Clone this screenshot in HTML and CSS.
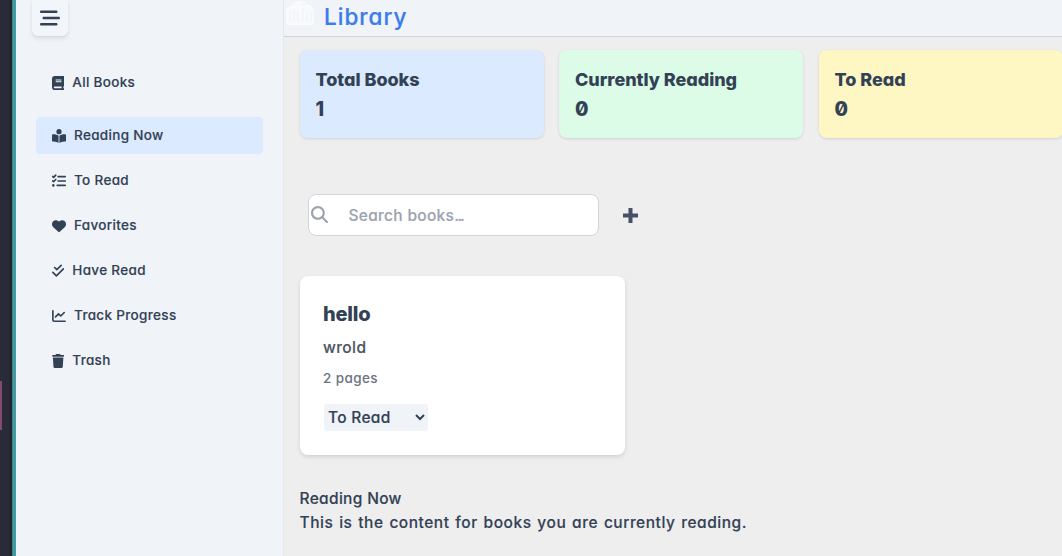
FILE: index.html
```html
<!DOCTYPE html>
<html lang="en">
<head>
<meta charset="utf-8">
<title>Library</title>
<link rel="stylesheet" href="styles.css">
</head>
<body>
<div class="desktop"><span class="desktop-mark"></span></div>
<div class="window-edge"></div>
<aside class="sidebar">
  <button class="menu-button" aria-label="Menu">
    <svg viewBox="0 0 512 512" width="20" height="20"><path d="M0 96C0 78.300 14.300 64 32 64H416c17.700 0 32 14.300 32 32s-14.300 32-32 32H32C14.300 128 0 113.700 0 96zM64 256c0-17.700 14.300-32 32-32H480c17.700 0 32 14.300 32 32s-14.300 32-32 32H96c-17.700 0-32-14.300-32-32zM448 416c0 17.700-14.300 32-32 32H32c-17.700 0-32-14.300-32-32s14.300-32 32-32H416c17.700 0 32 14.300 32 32z"/></svg>
  </button>
  <nav class="nav">
    <a class="nav-item nav-first"><svg viewBox="0 0 448 512" width="12.25" height="14"><path d="M96 0C43 0 0 43 0 96V416c0 53 43 96 96 96H384h32c17.700 0 32-14.300 32-32s-14.300-32-32-32V384c17.700 0 32-14.300 32-32V32c0-17.700-14.300-32-32-32H384 96zm0 384H352v64H96c-17.700 0-32-14.300-32-32s14.300-32 32-32zm32-240c0-8.800 7.200-16 16-16H336c8.800 0 16 7.200 16 16s-7.200 16-16 16H144c-8.800 0-16-7.200-16-16zm16 48H336c8.800 0 16 7.200 16 16s-7.200 16-16 16H144c-8.800 0-16-7.200-16-16s7.200-16 16-16z"/></svg><span>All Books</span></a>
    <a class="nav-item active"><svg viewBox="0 0 512 512" width="14" height="14"><path d="M160 96a96 96 0 1 1 192 0A96 96 0 1 1 160 96zm80 152V512l-48.400-24.200c-20.900-10.400-43.500-17-66.800-19.300l-96-9.600C12.500 457.200 0 443.500 0 427V224c0-17.700 14.300-32 32-32H62.300c63.600 0 125.600 19.600 177.700 56zm32 264V248c52.100-36.400 114.100-56 177.700-56H480c17.700 0 32 14.300 32 32V427c0 16.400-12.500 30.200-28.800 31.800l-96 9.600c-23.200 2.300-45.900 8.900-66.800 19.300L272 512z"/></svg><span>Reading Now</span></a>
    <a class="nav-item"><svg class="line" viewBox="0 0 512 512" width="14" height="14"><path d="M24 90l36 34 76-82M24 248l36 34 76-82M222 96H486M222 256H486M190 416H486"/><circle class="dot" cx="48" cy="416" r="46"/></svg><span>To Read</span></a>
    <a class="nav-item"><svg viewBox="0 0 512 512" width="14" height="14"><path d="M47.600 300.400L228.300 469.100c7.500 7 17.400 10.900 27.700 10.900s20.200-3.900 27.700-10.900L464.400 300.400c30.400-28.300 47.600-68 47.600-109.500v-5.800c0-69.900-50.500-129.500-119.400-141C347 36.500 300.600 51.400 268 84L256 96 244 84c-32.600-32.600-79-47.500-124.600-39.900C50.500 55.600 0 115.200 0 185.100v5.800c0 41.500 17.200 81.200 47.600 109.500z"/></svg><span>Favorites</span></a>
    <a class="nav-item"><svg class="line" viewBox="0 0 448 512" width="12.25" height="14"><path d="M96 128l80 80L336 48M32 304L160 432 416 176"/></svg><span>Have Read</span></a>
    <a class="nav-item"><svg class="line" viewBox="0 0 512 512" width="14" height="14"><path d="M32 64V400q0 48 48 48H480M128 288l112-112 80 80L448 128"/></svg><span>Track Progress</span></a>
    <a class="nav-item"><svg viewBox="0 0 448 512" width="12.25" height="14"><path d="M135.200 17.700L128 32H32C14.300 32 0 46.300 0 64S14.300 96 32 96H416c17.700 0 32-14.300 32-32s-14.300-32-32-32H320l-7.200-14.300C307.400 6.800 296.300 0 284.200 0H163.800c-12.100 0-23.200 6.800-28.600 17.700zM416 128H32L53.200 467c1.600 25.300 22.600 45 47.900 45H346.900c25.300 0 46.300-19.700 47.900-45L416 128z"/></svg><span>Trash</span></a>
  </nav>
</aside>
<main class="main">
  <header class="header">
    <svg class="logo" viewBox="0 0 30 27" width="30" height="27"><path d="M2 9L7 3l6-2 8 1 6 5 2 4V23q0 2-2 2H3q-2 0-2-2V9z"/><path class="logo-lines" d="M5 11V22M9 9V21M13 11V22M18 8V22M22 11V22M26 12V22M4 6l6-3M17 5l7-2"/></svg>
    <h1>Library</h1>
  </header>
  <section class="stats">
    <div class="stat blue"><h2>Total Books</h2><p>1</p></div>
    <div class="stat green"><h2>Currently Reading</h2><p>0</p></div>
    <div class="stat yellow"><h2>To Read</h2><p>0</p></div>
  </section>
  <div class="tools">
    <label class="search">
      <svg viewBox="0 0 512 512" width="17" height="17"><path d="M416 208c0 45.900-14.900 88.300-40 122.700L502.600 457.400c12.500 12.500 12.500 32.800 0 45.300s-32.800 12.500-45.300 0L330.700 376c-34.400 25.200-76.800 40-122.700 40C93.100 416 0 322.900 0 208S93.100 0 208 0S416 93.100 416 208zM208 352a144 144 0 1 0 0-288 144 144 0 1 0 0 288z"/></svg>
      <span>Search books<span class="dots">...</span></span>
    </label>
    <svg class="plus" viewBox="0 0 15 15" width="15" height="15"><path d="M5.500 0h4v5.500H15v4H9.500V15h-4V9.500H0v-4h5.500z"/></svg>
  </div>
  <article class="book">
    <h3>hello</h3>
    <p class="author">wrold</p>
    <p class="pages">2 pages</p>
    <div class="status"><span>To Read</span><svg viewBox="0 0 10 7" width="10" height="7"><path d="M1 1L5 5L9 1"/></svg></div>
  </article>
  <section class="content">
    <p class="content-title">Reading Now</p>
    <p class="content-text">This is the content for books you are currently reading.</p>
  </section>
</main>
</body>
</html>
```
FILE: styles.css
```css
* { box-sizing: border-box; }
body {
  margin: 0;
  height: 556px;
  display: flex;
  overflow: hidden;
  background: #eeeeee;
  color: #334155;
  font-family: Inter, "Open Sans", sans-serif;
  font-weight: 500;
  font-feature-settings: "cv11", "zero";
}
h1, h2, h3, p { margin: 0; }
svg { display: block; flex: none; fill: currentColor; }
span, h1, h2, h3, p { white-space: nowrap; }
.desktop { width: 12px; flex: none; padding-top: 381px; background: linear-gradient(90deg, #2a2b39 0 9px, #252431 9px); }
.desktop-mark { display: block; width: 2px; height: 49px; background: #824a70; }
.window-edge { width: 4px; flex: none; background: #459aa2; border-left: 1px solid #397f88; }
.sidebar { width: 268px; flex: none; padding: 0 20px; background: #f0f4f8; border-right: 1px solid #e4e8ed; border-top-left-radius: 3px; }
.menu-button {
  display: flex; align-items: flex-start; justify-content: center;
  width: 36px; height: 36px; margin-left: -4px; padding: 8px 0 0; border: 0;
  border-radius: 0 0 6px 6px; background: #f2f5f9; color: #334155;
  box-shadow: 0 3px 5px rgba(0, 0, 0, .08), 0 1px 2px rgba(0, 0, 0, .05);
}
.nav { display: flex; flex-direction: column; gap: 8px; padding-top: 28px; }
.nav-item { display: flex; align-items: center; gap: 8px; height: 37px; padding: 0 16px; border-radius: 4px; font-size: 13.500px; letter-spacing: .33px; -webkit-text-stroke: .15px currentColor; }
.nav-item span { padding-bottom: 2px; }
.nav-first { margin-bottom: 8px; }
.active { background: #dbeafe; }
.line { fill: none; stroke: currentColor; stroke-width: 60; stroke-linecap: round; stroke-linejoin: round; }
.line .dot { fill: currentColor; stroke: none; }
.main { flex: 1; min-width: 0; }
.header { display: flex; height: 37px; padding: 0 0 3px 1px; align-items: center; gap: 9px; background: #f0f4f8; border-bottom: 1px solid #ccd6da; }
.logo { fill: #f9fafb; align-self: flex-start; }
.logo-lines { fill: none; stroke: #edf1f5; stroke-width: 1; }
h1 { color: #3b7bea; font-size: 22.500px; font-weight: 500; line-height: 32px; letter-spacing: 1px; -webkit-text-stroke: .2px currentColor; }
.stats { display: grid; grid-template-columns: repeat(3, 244px); gap: 15.500px; padding: 13px 0 0 15.500px; }
.stat { height: 88px; padding: 16px; border-radius: 8px; box-shadow: 0 1px 3px rgba(0, 0, 0, .12); }
.stat h2, .stat p { font-size: 18px; line-height: 28px; font-weight: 800; letter-spacing: -.03px; }
.stat p { padding-top: 1px; font-size: 19.500px; }
.blue { background: #dbeafe; }
.green { background: #dcfce7; }
.yellow { background: #fef6c3; }
.tools { display: flex; align-items: center; gap: 24px; padding: 56px 0 0 24px; }
.search { display: flex; align-items: center; gap: 20.500px; width: 291px; height: 42px; padding: 0 2px; background: #fff; border: 1px solid #d1d5db; border-radius: 8px; color: #9ca3af; font-size: 15.500px; letter-spacing: .3px; -webkit-text-stroke: .15px currentColor; }
.search svg { margin-top: -2px; }
.search .dots { letter-spacing: -1.800px; }
.plus { color: #475066; }
.book { width: 325px; height: 179px; margin: 40px 0 0 16px; padding: 24px 23px; background: #fff; border-radius: 8px; box-shadow: 0 2px 4px rgba(0, 0, 0, .12); }
h3 { font-size: 20px; line-height: 29px; font-weight: 800; letter-spacing: -.2px; color: #334155; }
.author { margin-top: 7px; font-size: 15.500px; line-height: 24px; letter-spacing: .4px; color: #4b5563; }
.pages { margin-top: 8px; font-size: 13.500px; line-height: 20px; letter-spacing: .4px; color: #6b7280; }
.status { display: flex; align-items: center; justify-content: space-between; width: 104px; height: 27px; margin: 16px 0 0 1px; padding: 0 3px 0 4px; border-radius: 3px; background: #f0f4f8; font-size: 15.500px; letter-spacing: .3px; }
.status span { padding-bottom: 1px; }
.status svg { fill: none; stroke: currentColor; stroke-width: 2; }
.author, .status span, .content { -webkit-text-stroke: .15px currentColor; }
.content { padding: 32px 0 0 15.500px; font-size: 15.500px; line-height: 24px; }
.content-title { letter-spacing: .32px; }
.content-text { letter-spacing: .52px; word-spacing: 1.200px; }
```
